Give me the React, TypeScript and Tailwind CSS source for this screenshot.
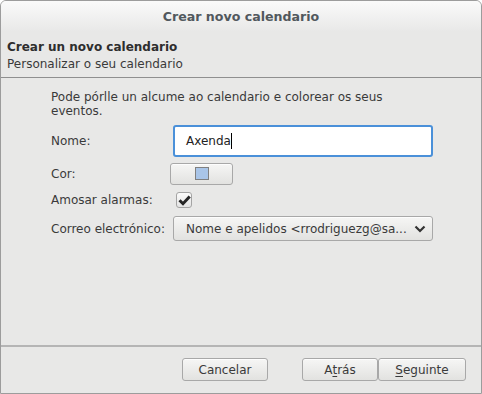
import React from "react";

const btn =
  "flex items-center justify-center rounded-[3px] border border-[#a8a8a8] bg-gradient-to-b from-[#f6f6f5] to-[#e2e2e0] shadow-[inset_0_1px_0_#fdfdfd]";

export default function App() {
  return (
    <div
      className="w-[482px] h-[394px] bg-[#e8e8e7] border border-[#9c9c9c] rounded-t-[6px] flex flex-col text-[12px] leading-[14px] text-[#3a3a3a] overflow-hidden"
      style={{ fontFamily: '"DejaVu Sans", sans-serif' }}
    >
      {/* title bar */}
      <div className="h-[31px] shrink-0 flex items-center justify-center bg-gradient-to-b from-[#fafafa] to-[#e8e8e7] font-bold text-[#51585d] text-[12.6px] pt-[1px]">
        Crear novo calendario
      </div>
      {/* header */}
      <div className="h-[45px] shrink-0 px-[6px] pt-[7px]">
        <div className="font-bold text-[#2e2e2e] leading-[17px]">Crear un novo calendario</div>
        <div className="leading-[16px]">Personalizar o seu calendario</div>
      </div>
      <div className="h-[1px] shrink-0 bg-[#8f8f8f]" />
      {/* body */}
      <div className="flex-1 pl-[50px] pt-[12px]">
        <div className="w-[380px] leading-[14px]">
          Pode pórlle un alcume ao calendario e colorear os seus eventos.
        </div>
        <div className="flex items-center mt-[7px] h-[32px]">
          <div className="w-[122px]">Nome:</div>
          <div className="w-[260px] h-[32px] rounded-[3px] border-2 border-[#4a90d9] bg-white flex items-center pl-[11px] text-[#222]">
            Axenda
            <span className="inline-block w-[1px] h-[16px] bg-black" />
          </div>
        </div>
        <div className="flex items-center mt-[6px] h-[21px]">
          <div className="w-[119px]">Cor:</div>
          <div className={btn + " w-[63px] h-[22px]"}>
            <div className="w-[14px] h-[13px] border border-[#808080] bg-[#a9c5e8]" />
          </div>
        </div>
        <div className="flex items-center mt-[8px] h-[16px]">
          <div className="w-[125px]">Amosar alarmas:</div>
          <div className="w-[16px] h-[16px] rounded-[3px] border border-[#a4a4a4] bg-gradient-to-b from-[#fbfbfb] to-[#e4e4e4] flex items-center justify-center">
            <svg width="13" height="11" viewBox="0 0 13 11">
              <path d="M1.5 5.2 L5 8.7 L11.7 1.5" fill="none" stroke="#262626" strokeWidth="3" />
            </svg>
          </div>
        </div>
        <div className="flex items-center mt-[8px] h-[25px]">
          <div className="w-[122px]">Correo electrónico:</div>
          <div className={btn + " w-[260px] h-[25px] !justify-between pl-[12px] pr-[6px]"}>
            <span>Nome e apelidos &lt;rrodriguezg@sa...</span>
            <svg width="12" height="8" viewBox="0 0 12 8">
              <path d="M1.5 1.5 L6 6 L10.5 1.5" fill="none" stroke="#333" strokeWidth="2.2" />
            </svg>
          </div>
        </div>
      </div>
      <div className="h-[2px] shrink-0 bg-[#b5b5b5]" />
      {/* footer */}
      <div className="h-[46px] shrink-0 flex items-start pt-[11px] pl-[181px]">
        <div className={btn + " w-[86px] h-[23px]"}>Cancelar</div>
        <div className={btn + " w-[76px] h-[23px] ml-[34px]"}>
          A<span className="underline underline-offset-2">t</span>rás
        </div>
        <div className={btn + " w-[88px] h-[23px] ml-[0px]"}>
          <span className="underline underline-offset-2">S</span>eguinte
        </div>
      </div>
    </div>
  );
}
